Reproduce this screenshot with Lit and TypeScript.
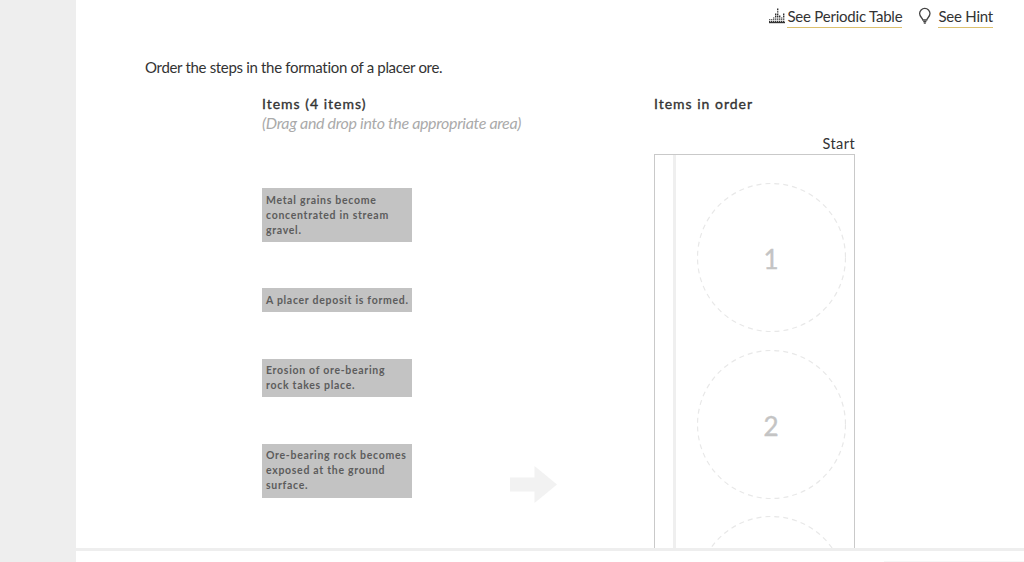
import { LitElement, html, css, svg } from "lit";
import { customElement } from "lit/decorators.js";

const items: string[] = [
  "Metal grains become concentrated in stream gravel.",
  "A placer deposit is formed.",
  "Erosion of ore-bearing rock takes place.",
  "Ore-bearing rock becomes exposed at the ground surface.",
];

const bars: [number, number][] = [
  [0.7, 3], [2.7, 3], [4.7, 5], [6.7, 9], [8.7, 14], [10.7, 7], [12.7, 5], [14.7, 9],
];

@customElement("app-root")
export class AppRoot extends LitElement {
  static styles = css`
    :host {
      display: grid;
      grid-template-columns: 76px 1fr;
      width: 1024px;
      height: 562px;
      overflow: hidden;
      background: #fff;
      font-family: Lato, "Open Sans", sans-serif;
      color: #333;
    }
    .side { background: #eeeeee; }
    .main { display: flex; flex-direction: column; min-width: 0; height: 562px; }
    .content {
      height: 548px;
      overflow: hidden;
      flex: none;
      display: flex;
      flex-direction: column;
    }
    .rule { height: 3px; background: #eeeeee; flex: none; }
    .foot { flex: 1; display: flex; justify-content: flex-end; align-items: flex-end; }
    .foot i { display: block; width: 140px; height: 1px; background: #f6f6f6; }
    .top {
      display: flex;
      justify-content: flex-end;
      gap: 16px;
      padding: 7px 31px 0 0;
      height: 21px;
      flex: none;
      font-size: 15px;
      letter-spacing: -0.22px;
      line-height: 19px;
    }
    .tool { display: flex; align-items: flex-start; gap: 2px; }
    .tool.hint { gap: 6px; }
    .tool svg { display: block; flex: none; }
    .tool a {
      display: block;
      color: #333;
      border-bottom: 1px solid #dcc06e;
      height: 20px;
    }
    .q {
      margin: 30px 0 0 69px;
      font-size: 15px;
      letter-spacing: -0.32px;
      line-height: 18px;
      color: #333;
      flex: none;
    }
    .cols { display: flex; margin-top: 18px; flex: none; }
    .left { width: 392px; margin-left: 186px; flex: none; position: relative; }
    h3 {
      margin: 0;
      font-size: 14px;
      font-weight: 400;
      -webkit-text-stroke: 0.35px #333;
      line-height: 20px;
      letter-spacing: 1px;
      color: #333;
    }
    .note {
      font-style: italic;
      font-size: 16px;
      letter-spacing: -0.33px;
      line-height: 20px;
      color: #aaaaaa;
      margin-top: -1px;
    }
    .cards { display: flex; flex-direction: column; margin-top: 55px; }
    .card {
      width: 150px;
      box-sizing: border-box;
      background: #c3c3c3;
      padding: 5px 5px 0 4px;
      font-size: 10.5px;
      font-weight: 700;
      line-height: 15.2px;
      letter-spacing: 0.7px;
      color: #5c5c5c;
    }
    .c0 { height: 54px; margin-bottom: 46px; }
    .c1 { height: 24px; margin-bottom: 47px; white-space: nowrap; }
    .c2 { height: 38px; margin-bottom: 47px; padding-top: 4px; }
    .c3 { height: 54px; padding-top: 4px; }
    .arrow { position: absolute; left: 248px; top: 372px; display: block; }
    .right { width: 201px; flex: none; }
    .start {
      text-align: right;
      font-size: 14.5px;
      line-height: 18px;
      margin-top: 21px;
      color: #333;
      letter-spacing: 0.4px;
    }
    .track {
      margin-top: 1px;
      width: 201px;
      height: 394px;
      box-sizing: border-box;
      border: 1px solid #c9c9c9;
      border-bottom: none;
      display: grid;
      grid-template-columns: 18px 3px 1fr;
      overflow: hidden;
    }
    .bar { grid-column: 2; background: #efefef; }
    .slots {
      grid-column: 3;
      padding: 28px 0 0 21px;
      display: flex;
      flex-direction: column;
      gap: 17.5px;
    }
    .slot {
      position: relative;
      width: 149px;
      height: 149px;
      flex: none;
      display: flex;
      align-items: center;
      justify-content: center;
      padding: 3px 1px 0 0;
      box-sizing: border-box;
      font-size: 26px;
      color: #c4c4c4;
      -webkit-text-stroke: 0.4px #c4c4c4;
    }
    .ring { position: absolute; inset: 0; display: block; }
  `;

  private barsIcon() {
    return html`<svg width="16" height="20" viewBox="0 0 16 20" aria-hidden="true">
      ${bars.map(([x, h]) =>
        svg`<line x1=${x} x2=${x} y1="15" y2=${15 - h} stroke="#333" stroke-width="1.4" stroke-dasharray="1.1 .6"></line>`
      )}
      <rect x="0" y="15" width="16" height="1.2" fill="#333"></rect>
    </svg>`;
  }

  private bulbIcon() {
    return html`<svg width="14" height="18" viewBox="0 0 14 18" aria-hidden="true">
      <path d="M4.8 13 C4.4 10.8 1.6 9.6 1.6 6.6 A5.2 5.2 0 0 1 12 6.6 C12 9.6 9.2 10.8 8.8 13 Z" fill="none" stroke="#444" stroke-width="1.3"></path>
      <path d="M5.2 14.6 H8.4 M5.8 16.2 H7.8" stroke="#444" stroke-width="1.2" fill="none"></path>
    </svg>`;
  }

  private slot(label: string) {
    return html`<div class="slot">
      <svg class="ring" width="149" height="149" viewBox="0 0 149 149" aria-hidden="true">
        <circle cx="74.5" cy="74.5" r="74" fill="none" stroke="#e8e8e8" stroke-width="1.2" stroke-dasharray="5 4"></circle>
      </svg>
      ${label}
    </div>`;
  }

  render() {
    return html`
      <div class="side"></div>
      <div class="main">
        <div class="content">
          <div class="top">
            <div class="tool">${this.barsIcon()}<a>See Periodic Table</a></div>
            <div class="tool hint">${this.bulbIcon()}<a>See Hint</a></div>
          </div>
          <div class="q">Order the steps in the formation of a placer ore.</div>
          <div class="cols">
            <div class="left">
              <h3>Items (4 items)</h3>
              <div class="note">(Drag and drop into the appropriate area)</div>
              <div class="cards">
                ${items.map((t, i) => html`<div class="card c${i}">${t}</div>`)}
              </div>
              <svg class="arrow" width="47" height="37" viewBox="0 0 47 37" aria-hidden="true">
                <path d="M0 11.5 H24.5 V0 L47 18.5 L24.5 37 V25.5 H0 Z" fill="#f2f2f2"></path>
              </svg>
            </div>
            <div class="right">
              <h3>Items in order</h3>
              <div class="start">Start</div>
              <div class="track">
                <div class="bar"></div>
                <div class="slots">
                  ${this.slot("1")}${this.slot("2")}${this.slot("")}
                </div>
              </div>
            </div>
          </div>
        </div>
        <div class="rule"></div>
        <div class="foot"><i></i></div>
      </div>
    `;
  }
}
